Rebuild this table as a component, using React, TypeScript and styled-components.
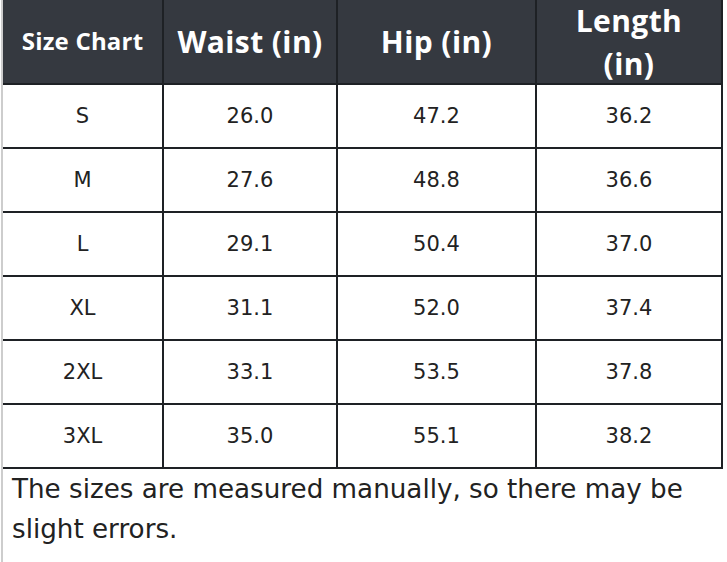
import React from "react";
import styled, { createGlobalStyle } from "styled-components";

const Global = createGlobalStyle`
  html, body { margin: 0; padding: 0; background: #ffffff; }
  #root { width: 727px; height: 562px; overflow: hidden; }
`;

const Page = styled.div`
  box-sizing: border-box;
  width: 727px;
  height: 562px;
  margin-left: 1px;
  border-left: 2px solid #cdcdcd;
  background: #ffffff;
`;

const Grid = styled.div`
  display: grid;
  grid-template-columns: 159px 172px 197px 184px;
  grid-template-rows: 83px repeat(6, 62px);
  gap: 2px;
  width: max-content;
  background: #1e2125;
  border-right: 2px solid #1e2125;
  border-bottom: 2px solid #1e2125;
`;

const HeadCell = styled.div<{ $small?: boolean }>`
  display: flex;
  align-items: center;
  justify-content: center;
  text-align: center;
  background: #353940;
  color: #ffffff;
  font-family: "Open Sans", "Noto Sans", sans-serif;
  font-weight: 700;
  font-size: ${(p) => (p.$small ? "24px" : "30px")};
  letter-spacing: ${(p) => (p.$small ? "0.2px" : "0.4px")};
  line-height: 43px;
  padding-bottom: ${(p) => (p.$small ? "2px" : "0")};
`;

const Cell = styled.div`
  display: flex;
  align-items: center;
  justify-content: center;
  background: #ffffff;
  color: #222222;
  font-family: "DejaVu Sans", Verdana, sans-serif;
  font-size: 21px;
`;

const Note = styled.p`
  margin: 0;
  padding: 0 0 0 9px;
  color: #222222;
  font-family: "DejaVu Sans", Verdana, sans-serif;
  font-size: 26.2px;
  line-height: 40px;
  width: 710px;
`;

const rows: [string, string, string, string][] = [
  ["S", "26.0", "47.2", "36.2"],
  ["M", "27.6", "48.8", "36.6"],
  ["L", "29.1", "50.4", "37.0"],
  ["XL", "31.1", "52.0", "37.4"],
  ["2XL", "33.1", "53.5", "37.8"],
  ["3XL", "35.0", "55.1", "38.2"],
];

export default function App() {
  return (
    <>
      <Global />
      <Page>
        <Grid>
          <HeadCell $small>Size Chart</HeadCell>
          <HeadCell>Waist (in)</HeadCell>
          <HeadCell>Hip (in)</HeadCell>
          <HeadCell>
            Length
            <br />
            (in)
          </HeadCell>
          {rows.map((r) =>
            r.map((v, i) => <Cell key={r[0] + i}>{v}</Cell>)
          )}
        </Grid>
        <Note>
          The sizes are measured manually, so there may be
          <br />
          slight errors.
        </Note>
      </Page>
    </>
  );
}
